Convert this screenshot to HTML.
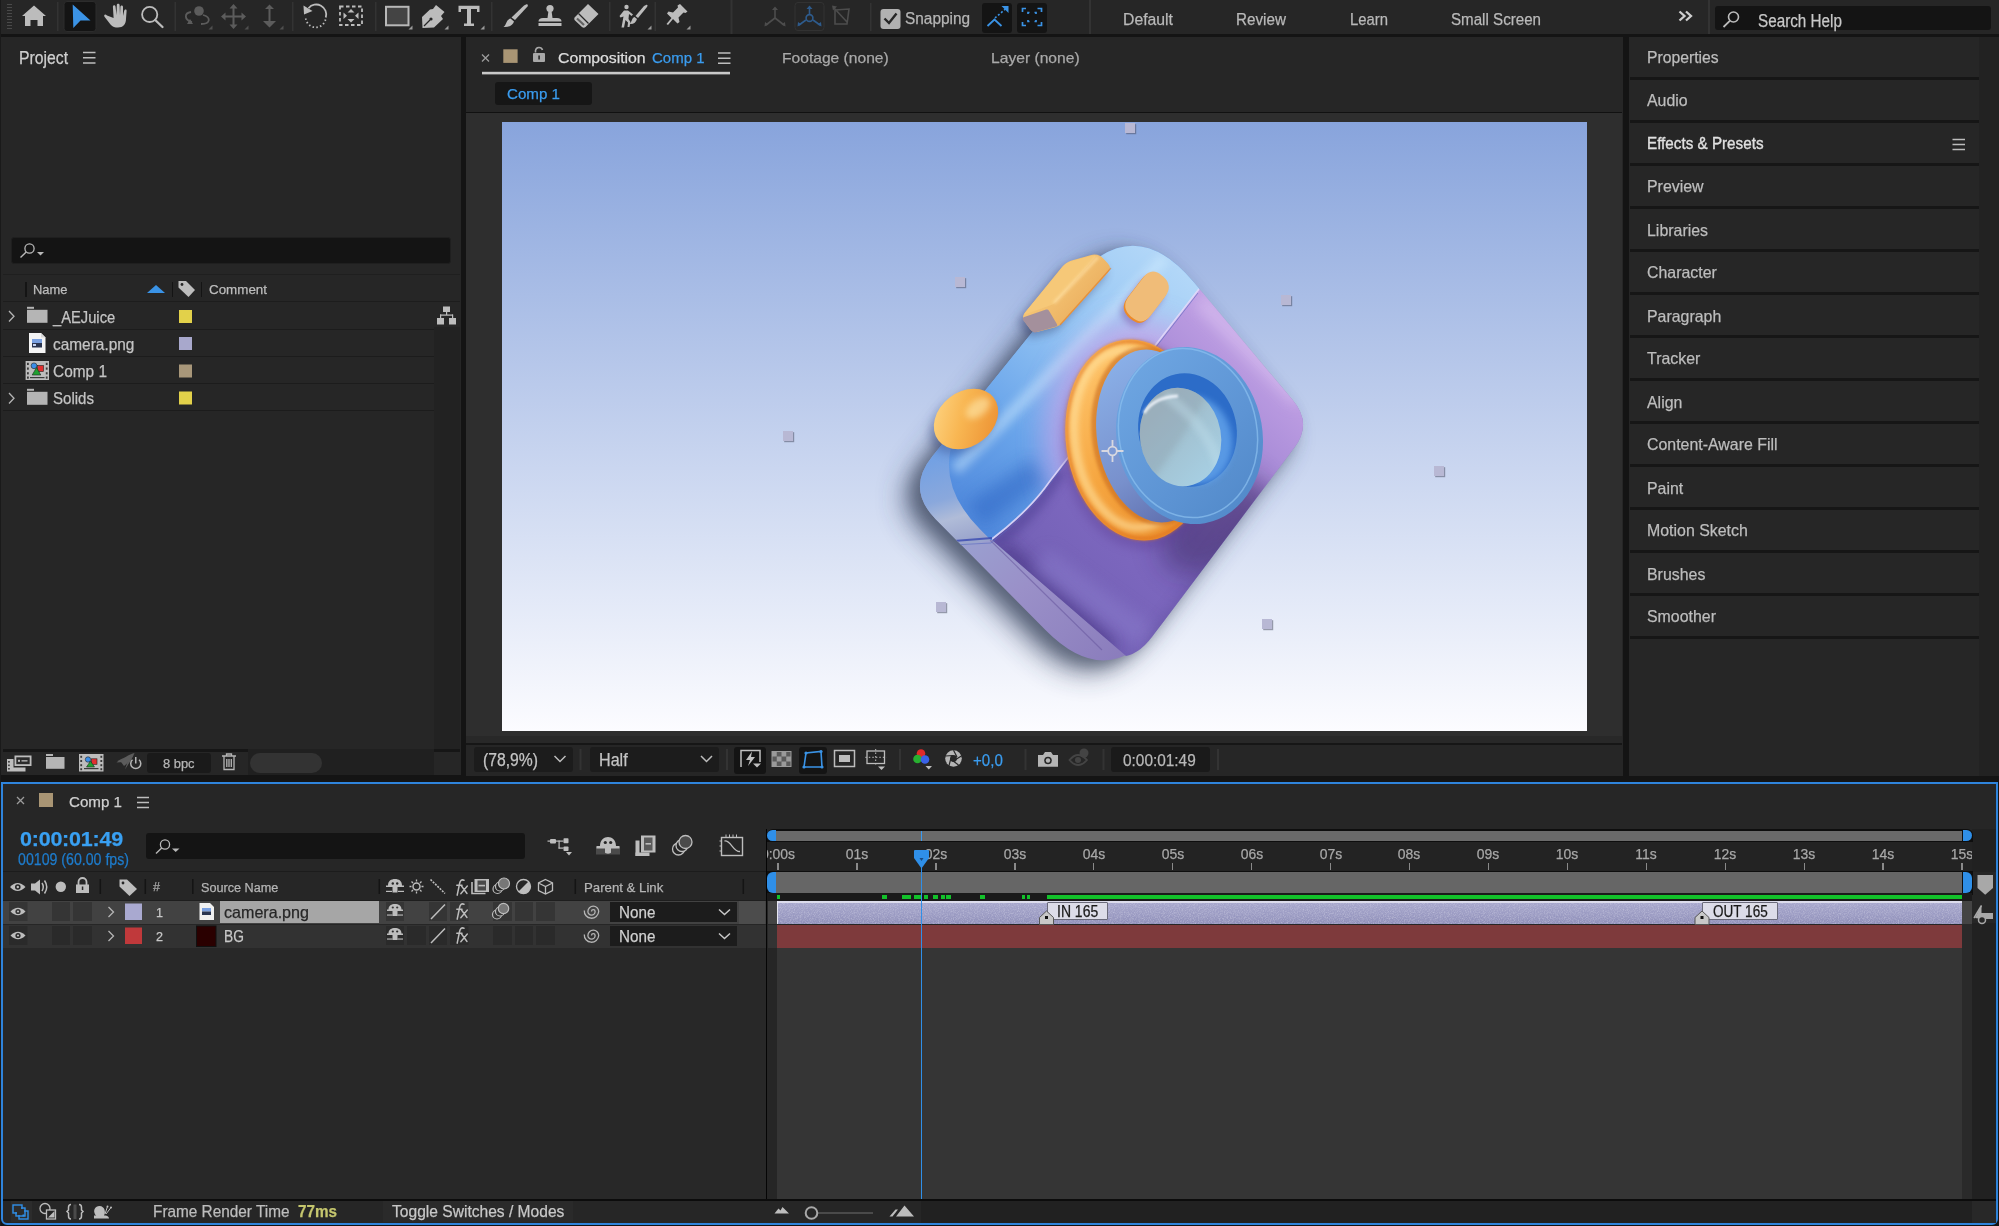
<!DOCTYPE html>
<html><head><meta charset="utf-8">
<style>
*{margin:0;padding:0;box-sizing:border-box}
html,body{width:1999px;height:1226px;overflow:hidden;background:#141414;font-family:"Liberation Sans",sans-serif;color:#c4c4c4}
.a{position:absolute}
.t{position:absolute;white-space:nowrap;line-height:1;-webkit-text-stroke:0.25px currentColor}
svg{position:absolute;overflow:visible}
</style></head><body>
<!-- toolbar -->
<div class="a" style="left:0;top:0;width:1999px;height:34px;background:#262626"></div>
<div class="a" style="left:0;top:0;width:1px;height:1226px;background:#1a1a1a"></div>
<svg style="left:0;top:0" width="1999" height="34">
 <!-- grip -->
 <g stroke="#4a4a4a" stroke-width="1">
  <path d="M7 4.5h5M7 7.5h5M7 10.5h5M7 13.5h5M7 16.5h5M7 19.5h5M7 22.5h5M7 25.5h5M7 28.5h5"/>
 </g>
 <!-- separators -->
 <g fill="#333">
  <rect x="57" y="2" width="1.5" height="29"/><rect x="174.5" y="2" width="1.5" height="29"/>
  <rect x="292" y="2" width="1.5" height="29"/><rect x="375" y="2" width="1.5" height="29"/>
  <rect x="491" y="2" width="1.5" height="29"/><rect x="609" y="2" width="1.5" height="29"/>
  <rect x="654.5" y="2" width="1.5" height="29"/><rect x="730.5" y="0" width="2" height="34"/>
  <rect x="870" y="3" width="1.5" height="28"/><rect x="1089" y="0" width="2" height="34"/>
  <rect x="1708" y="0" width="2" height="34"/>
 </g>
 <!-- home -->
 <path d="M34 5.5 L46 16 L43 16 L43 26 L37.5 26 L37.5 20 L30.5 20 L30.5 26 L25 26 L25 16 L22 16 Z" fill="#bcbcbc"/>
 <!-- selection box -->
 <rect x="64" y="1.5" width="32" height="30" rx="3" fill="#141414" stroke="#2c2c2c"/>
 <path d="M72.7 4.5 L90.5 20.5 L80.5 20.5 L73.3 28 Z" fill="#3b93e6"/>
 <!-- hand -->
 <path d="M107 15.5 C105 13.5 103.5 15 104.5 16.8 L110.5 24.5 C112.5 27 115 27.5 118 27.5 C123 27.5 126 24 126 19 L126.6 11 C126.8 9.2 124.6 9 124.2 10.8 L123 16 L123 7 C123 5 120.5 5 120.4 7 L120 15 L119.6 5.2 C119.5 3.4 116.8 3.4 116.8 5.2 L116.6 15 L115.5 6.5 C115.2 4.6 112.8 4.8 112.9 6.8 L113.6 18 Z" fill="#bcbcbc"/>
 <!-- zoom -->
 <circle cx="149.7" cy="14.4" r="7.6" fill="none" stroke="#bcbcbc" stroke-width="1.8"/>
 <path d="M155.2 20 L162.5 27" stroke="#bcbcbc" stroke-width="2.3" stroke-linecap="round"/>
 <!-- orbit dim -->
 <g fill="none" stroke="#5c5c5c" stroke-width="1.8">
  <path d="M192 22 C184 20 184 13 191 12 M203 15 C211 17 211 24 201 24"/>
 </g>
 <circle cx="199" cy="11" r="4.8" fill="#5c5c5c"/>
 <path d="M190 19 L193 24 L187 24 Z" fill="#5c5c5c"/>
 <path d="M212.5 25.5 L212.5 29.5 L208.5 29.5 Z" fill="#4f4f4f"/>
 <!-- move dim -->
 <g fill="#5c5c5c">
  <rect x="232.5" y="7" width="2" height="19"/><rect x="224" y="15.5" width="19" height="2"/>
  <path d="M233.5 4 L237.5 8.5 L229.5 8.5 Z M233.5 29 L237.5 24.5 L229.5 24.5 Z M221 16.5 L225.5 12.5 L225.5 20.5 Z M246 16.5 L241.5 12.5 L241.5 20.5 Z"/>
  <path d="M248.5 25.5 L248.5 29.5 L244.5 29.5 Z" fill="#4f4f4f"/>
 </g>
 <!-- dolly dim -->
 <g fill="#5c5c5c">
  <rect x="268.5" y="7" width="2" height="18"/>
  <path d="M269.5 4.5 L274 9 L265 9 Z M269.5 27.5 L276 21 L263 21 Z"/>
  <path d="M283.5 25.5 L283.5 29.5 L279.5 29.5 Z" fill="#4f4f4f"/>
 </g>
 <!-- rotate -->
 <path d="M308.5 8.2 A10 10 0 0 1 325.8 17.5" fill="none" stroke="#bcbcbc" stroke-width="1.8"/>
 <path d="M325.5 19.5 A10 10 0 0 1 305.8 18.5" fill="none" stroke="#bcbcbc" stroke-width="1.8" stroke-dasharray="1.5 2.3"/>
 <path d="M303.5 5.5 L304 14.5 L312.5 11 Z" fill="#bcbcbc"/>
 <!-- anchor point -->
 <g fill="none" stroke="#bcbcbc" stroke-width="1.8" stroke-dasharray="3.5 2.5">
  <rect x="340" y="6.5" width="22" height="18.5"/>
 </g>
 <path d="M351 9 L354.5 12.5 L347.5 12.5 Z M351 22.5 L354.5 19 L347.5 19 Z M343.5 12.5 L347 15.8 L343.5 19 Z M358.5 12.5 L355 15.8 L358.5 19 Z" fill="#bcbcbc"/>
 <!-- rectangle -->
 <rect x="386" y="6.8" width="22.5" height="18.5" fill="#444" stroke="#b8b8b8" stroke-width="2"/>
 <path d="M412.5 25.5 L412.5 29.5 L408.5 29.5 Z" fill="#9a9a9a"/>
 <!-- pen -->
 <path d="M436 5 L444.5 12 L441 16 L443 19 L434 27.5 L422.5 28 L422 17 L430 9.5 L433 9 Z" fill="#bcbcbc"/>
 <path d="M424 26 L430 20" stroke="#262626" stroke-width="1.2"/>
 <circle cx="431" cy="19" r="1.6" fill="#262626"/>
 <path d="M448.5 25.5 L448.5 29.5 L444.5 29.5 Z" fill="#9a9a9a"/>
 <!-- type -->
 <path d="M458.5 5.8 H479.5 V12 H477 V9 H471 V23.5 H474 V26 H464 V23.5 H467 V9 H461 V12 H458.5 Z" fill="#bcbcbc"/>
 <path d="M484.5 25.5 L484.5 29.5 L480.5 29.5 Z" fill="#9a9a9a"/>
 <!-- brush -->
 <path d="M526 4.5 C527.5 4 528.5 5 527.5 6.5 L515 20 L511.5 17.5 L524 5.5 Z" fill="#bcbcbc"/>
 <path d="M510.5 18.5 L514 21.5 C513 25 509 27.5 503.5 27 C506.5 25 506 19.5 510.5 18.5 Z" fill="#bcbcbc"/>
 <!-- stamp -->
 <circle cx="550" cy="8.5" r="3.6" fill="#bcbcbc"/>
 <path d="M548.5 10.5 H551.5 L552.5 18 H557 C560 18 561.5 19.5 561.5 21.5 H538.5 C538.5 19.5 540 18 543 18 H547.5 Z" fill="#bcbcbc"/>
 <rect x="538.5" y="23" width="23" height="3" fill="#bcbcbc"/>
 <!-- eraser -->
 <path d="M588 4 L598.5 14 L585.5 27 C584.5 28 583 28 582 27 L575 20.5 C574 19.5 574 18 575 17 Z" fill="#bcbcbc"/>
 <path d="M578.5 13.5 L588.5 23.5" stroke="#262626" stroke-width="1.2"/>
 <path d="M577 18.5 L584 25" stroke="#262626" stroke-width="2.2" opacity="0.6"/>
 <!-- roto brush -->
 <circle cx="626.5" cy="7" r="2.2" fill="#bcbcbc"/>
 <path d="M624 10.5 L628 10.5 L633 14.5 L631.5 16 L629 14 L628.5 19 L630.5 22 L629.5 27 L627.5 27 L628 22.5 L625.5 20 L624 27.5 L621.5 27.5 L623.5 16.5 L620.5 17.5 L619.5 16 Z" fill="#bcbcbc"/>
 <path d="M646 5 C647.5 4.5 648 5.5 647 7 L638 18 L635.5 16 L644 6 Z" fill="#bcbcbc"/>
 <path d="M634.5 17 L637 19 C636 22.5 633.5 24.5 629.5 24 C632 22 631.5 18 634.5 17 Z" fill="#bcbcbc"/>
 <path d="M651.5 25.5 L651.5 29.5 L647.5 29.5 Z" fill="#9a9a9a"/>
 <!-- puppet pin -->
 <path d="M680 4 L687.5 11.5 L685.5 13 L683.5 12.5 L678.5 17.5 L679.5 22 L677.5 23.5 L673 19 L668 25 L666.5 24 L671.5 18 L667 13.5 L668.5 11.5 L673 12.5 L678 7.5 L677.5 5.5 Z" fill="#bcbcbc"/>
 <path d="M690.5 25.5 L690.5 29.5 L686.5 29.5 Z" fill="#9a9a9a"/>
 <!-- 3D axis icons -->
 <g stroke="#4d4d4d" stroke-width="1.6" fill="none">
  <path d="M775 18 V9 M775 18 L766 25 M775 18 L784 25"/>
 </g>
 <g fill="#4d4d4d"><path d="M775 6.5 L778 10 L772 10 Z M764.5 26.5 L765 22 L768.5 24.5 Z M785.5 26.5 L781.5 24.5 L785 22 Z"/></g>
 <rect x="795" y="2.5" width="29" height="28" rx="3" fill="none" stroke="#323232"/>
 <g stroke="#2e5b8c" stroke-width="1.6" fill="none">
  <path d="M809.5 14 V8 M806 20 L799 25 M813 20 L820 25"/><circle cx="809.5" cy="18" r="3.4"/>
 </g>
 <g fill="#2e5b8c"><path d="M809.5 5.5 L812.5 9 L806.5 9 Z M797.5 26.5 L798 22 L801.5 24.5 Z M821.5 26.5 L817.5 24.5 L821 22 Z"/></g>
 <g stroke="#4d4d4d" stroke-width="1.6" fill="none">
  <path d="M835 10 L849 9 L847 24 L835 24 Z M834 8 L847 22"/>
 </g>
 <path d="M832 5.5 L837 6.5 L833 10.5 Z" fill="#4d4d4d"/>
 <!-- snapping checkbox -->
 <rect x="880.5" y="9" width="20" height="20" rx="3" fill="#b1b1b1"/>
 <path d="M884.5 18.5 L889 23 L896.5 13.5" fill="none" stroke="#262626" stroke-width="2.4"/>
 <!-- snap icons -->
 <rect x="982" y="3" width="30" height="30" rx="3" fill="#141414"/>
 <path d="M987.5 26 L994.5 19.5 L1001.5 26" fill="none" stroke="#3a93e6" stroke-width="1.8"/>
 <path d="M995 18 L1006 8.5" fill="none" stroke="#3a93e6" stroke-width="1.6" stroke-dasharray="2 2"/>
 <path d="M1008.5 6 L1008.5 13 L1001.5 6 Z" fill="#3a93e6"/>
 <rect x="1017" y="3" width="30" height="30" rx="3" fill="#141414"/>
 <g fill="none" stroke="#3a93e6" stroke-width="1.7">
  <path d="M1022.5 12 V8.5 H1026 M1037.5 8.5 H1041.5 V12 M1041.5 22 V25.5 H1037.5 M1026 25.5 H1022.5 V22"/>
  <path d="M1028 14 V12.5 H1029.5 M1034.5 12.5 H1036 V14 M1036 20 V21.5 H1034.5 M1029.5 21.5 H1028 V20"/>
 </g>
 <!-- >> -->
 <path d="M1679.5 11.5 L1684.5 16 L1679.5 20.5 M1686 11.5 L1691 16 L1686 20.5" fill="none" stroke="#cfcfcf" stroke-width="2.3"/>
 <!-- search help -->
 <rect x="1715" y="6" width="276" height="24" rx="3" fill="#141414"/>
 <circle cx="1733.5" cy="17" r="5" fill="none" stroke="#bcbcbc" stroke-width="1.6"/>
 <path d="M1729.8 20.8 L1723.5 27" stroke="#bcbcbc" stroke-width="1.8"/>
</svg>
<div class="t" style="left:905.0px;top:10.0px;font-size:16.25px;color:#b6b6b6;transform:scaleX(0.947);transform-origin:0 0">Snapping</div>
<div class="t" style="left:1123.0px;top:11.0px;font-size:17.36px;color:#b9b9b9;transform:scaleX(0.909);transform-origin:0 0">Default</div>
<div class="t" style="left:1236.0px;top:11.0px;font-size:17.36px;color:#b9b9b9;transform:scaleX(0.878);transform-origin:0 0">Review</div>
<div class="t" style="left:1350.0px;top:11.0px;font-size:17.36px;color:#b9b9b9;transform:scaleX(0.856);transform-origin:0 0">Learn</div>
<div class="t" style="left:1451.0px;top:11.0px;font-size:17.36px;color:#b9b9b9;transform:scaleX(0.872);transform-origin:0 0">Small Screen</div>
<div class="t" style="left:1758.0px;top:12.0px;font-size:18.06px;color:#c8c8c8;transform:scaleX(0.845);transform-origin:0 0">Search Help</div>
<!-- project panel -->
<div class="a" style="left:1px;top:37px;width:460px;height:738px;background:#262626"></div>
<div class="t" style="left:19.0px;top:50.0px;font-size:17.50px;color:#cfcfcf;transform:scaleX(0.900);transform-origin:0 0">Project</div>
<svg style="left:0;top:0" width="1" height="1">
 <path d="M83 52.5h12.5M83 57.8h12.5M83 63h12.5" stroke="#bdbdbd" stroke-width="1.6"/>
</svg>
<!-- search -->
<div class="a" style="left:11px;top:237px;width:440px;height:27px;background:#141414;border-radius:3px;border:1px solid #1f1f1f"></div>
<svg style="left:0;top:0" width="1" height="1">
 <circle cx="29.5" cy="248.5" r="4.6" fill="none" stroke="#b8b8b8" stroke-width="1.3"/>
 <path d="M26.2 252 L20.5 257.5" stroke="#b8b8b8" stroke-width="1.4"/>
 <path d="M37 252 L44 252 L40.5 255.5 Z" fill="#b8b8b8"/>
</svg>
<!-- column header -->
<div class="a" style="left:3px;top:274px;width:457px;height:1px;background:#1f1f1f"></div>
<div class="a" style="left:3px;top:301px;width:457px;height:1px;background:#1d1d1d"></div>
<div class="a" style="left:25px;top:282px;width:1.5px;height:15px;background:#141414"></div>
<div class="a" style="left:171.5px;top:282px;width:1.5px;height:15px;background:#141414"></div>
<div class="a" style="left:200.5px;top:282px;width:1.5px;height:15px;background:#141414"></div>
<div class="t" style="left:33.0px;top:283.0px;font-size:13.61px;color:#bdbdbd;transform:scaleX(0.950);transform-origin:0 0">Name</div>
<div class="t" style="left:209.0px;top:283.0px;font-size:13.61px;color:#bdbdbd;transform:scaleX(0.983);transform-origin:0 0">Comment</div>
<svg style="left:0;top:0" width="1" height="1">
 <path d="M147 293 L156 285 L165 293 Z" fill="#3a93e6"/>
 <path d="M178.5 281 L186 281 L195 290 L188.5 297 L178.5 287.5 Z" fill="#bdbdbd"/>
 <circle cx="182" cy="284.5" r="1.4" fill="#262626"/>
</svg>
<!-- rows -->
<div class="a" style="left:434px;top:302px;width:26px;height:448px;background:#222"></div>
<div class="a" style="left:434px;top:302px;width:26px;height:25px;background:#262626"></div>
<div class="a" style="left:3px;top:329px;width:431px;height:1px;background:#1c1c1c"></div>
<div class="a" style="left:3px;top:356px;width:431px;height:1px;background:#1c1c1c"></div>
<div class="a" style="left:3px;top:383px;width:431px;height:1px;background:#1c1c1c"></div>
<div class="a" style="left:3px;top:410px;width:431px;height:1px;background:#1c1c1c"></div>
<div class="t" style="left:53.0px;top:310.0px;font-size:16.53px;color:#c4c4c4;transform:scaleX(0.891);transform-origin:0 0">_AEJuice</div>
<div class="t" style="left:53.0px;top:336.0px;font-size:17.12px;color:#c4c4c4;transform:scaleX(0.901);transform-origin:0 0">camera.png</div>
<div class="t" style="left:53.0px;top:363.0px;font-size:17.12px;color:#c4c4c4;transform:scaleX(0.901);transform-origin:0 0">Comp 1</div>
<div class="t" style="left:53.0px;top:390.0px;font-size:17.12px;color:#c4c4c4;transform:scaleX(0.879);transform-origin:0 0">Solids</div>
<svg style="left:0;top:0" width="1" height="1">
 <g fill="none" stroke="#b5b5b5" stroke-width="1.3">
  <path d="M9 311 L14 316.3 L9 321.5"/><path d="M9 393 L14 398.3 L9 403.5"/>
 </g>
 <g fill="#b5b5b5">
  <rect x="27" y="306.8" width="7" height="2"/><rect x="27" y="309.8" width="20.5" height="13"/>
  <rect x="27" y="388.8" width="7" height="2"/><rect x="27" y="391.8" width="20.5" height="13"/>
 </g>
 <!-- png icon -->
 <path d="M29 333 L41 333 L45.5 337.5 L45.5 353 L29 353 Z" fill="#f4f4f4"/>
 <path d="M41 333 L41 337.5 L45.5 337.5" fill="#d8d8d8"/>
 <rect x="32" y="339" width="10" height="4" fill="#7aa0e0"/>
 <rect x="32" y="343" width="10" height="4.5" fill="#2a3550"/>
 <rect x="33" y="344" width="3" height="2" fill="#c8d4f0"/>
 <!-- comp icon -->
 <rect x="25.6" y="361" width="23.4" height="19" fill="#bdbdbd"/>
 <g fill="#3a3a3a"><rect x="27" y="362.8" width="1.8" height="2.2"/><rect x="27" y="367.5" width="1.8" height="2.2"/><rect x="27" y="372.2" width="1.8" height="2.2"/><rect x="27" y="376.5" width="1.8" height="2.2"/><rect x="45.8" y="362.8" width="1.8" height="2.2"/><rect x="45.8" y="367.5" width="1.8" height="2.2"/><rect x="45.8" y="372.2" width="1.8" height="2.2"/><rect x="45.8" y="376.5" width="1.8" height="2.2"/></g>
 <rect x="30" y="377" width="14.5" height="1.2" fill="#3a3a3a"/>
 <rect x="37.5" y="365.5" width="6" height="6" fill="#e03030" stroke="#222" stroke-width="0.6"/>
 <circle cx="34" cy="365.8" r="2.9" fill="#3a8ee8" stroke="#222" stroke-width="0.6"/>
 <path d="M36.5 367.5 L40.8 375 L32.2 375 Z" fill="#20a030" stroke="#222" stroke-width="0.6"/>
 <!-- label swatches -->
 <rect x="179" y="310" width="13" height="13" fill="#e2d14a"/>
 <rect x="179" y="337" width="13" height="13" fill="#a8a8cc"/>
 <rect x="179" y="364.5" width="13" height="13" fill="#a8977a"/>
 <rect x="179" y="391.5" width="13" height="13" fill="#e2d14a"/>
 <!-- hierarchy icon -->
 <g fill="#bdbdbd">
  <rect x="443" y="306.5" width="7" height="5.5"/><rect x="437" y="318" width="7" height="6.5"/><rect x="449" y="318" width="7" height="6.5"/>
  <rect x="446" y="312" width="1.2" height="3"/><rect x="440" y="314.5" width="13" height="1.2"/><rect x="440" y="314.5" width="1.2" height="3.5"/><rect x="452" y="314.5" width="1.2" height="3.5"/>
 </g>
</svg>
<!-- bottom bar -->
<div class="a" style="left:3px;top:749px;width:457px;height:3px;background:#161616"></div>
<div class="a" style="left:248px;top:749px;width:186px;height:26px;background:#202020"></div>
<div class="a" style="left:250px;top:752.5px;width:72px;height:20px;background:#333;border-radius:10px"></div>
<div class="a" style="left:147px;top:753px;width:64px;height:20px;background:#1a1a1a;border-radius:3px"></div>
<div class="t" style="left:163.4px;top:757.0px;font-size:13.06px;color:#b5b5b5;transform:scaleX(0.989);transform-origin:0 0">8 bpc</div>
<svg style="left:0;top:0" width="1" height="1">
 <!-- interpret footage -->
 <rect x="14.5" y="755.5" width="17" height="10.5" fill="#bdbdbd"/>
 <rect x="16.3" y="757.3" width="13.4" height="6.9" fill="#2a2a2a"/>
 <rect x="18" y="759.8" width="2" height="2" fill="#bdbdbd"/><rect x="21.5" y="760.2" width="6" height="1.3" fill="#bdbdbd"/>
 <path d="M7 759 H13.5 V767.5 H25.5 V771.5 H7 Z" fill="#bdbdbd"/>
 <g fill="#2a2a2a"><rect x="8.2" y="761" width="1.5" height="1.6"/><rect x="8.2" y="764.5" width="1.5" height="1.6"/><rect x="8.2" y="768" width="1.5" height="1.6"/></g>
 <!-- folder -->
 <rect x="46" y="754" width="7" height="2" fill="#b5b5b5"/><rect x="46" y="757" width="18.5" height="11.8" fill="#b5b5b5"/>
 <!-- new comp -->
 <rect x="79" y="754" width="24.5" height="17.5" fill="#bdbdbd"/>
 <g fill="#3a3a3a"><rect x="80.3" y="755.8" width="1.8" height="2"/><rect x="80.3" y="760" width="1.8" height="2"/><rect x="80.3" y="764.2" width="1.8" height="2"/><rect x="80.3" y="768.2" width="1.8" height="2"/><rect x="100.4" y="755.8" width="1.8" height="2"/><rect x="100.4" y="760" width="1.8" height="2"/><rect x="100.4" y="764.2" width="1.8" height="2"/><rect x="100.4" y="768.2" width="1.8" height="2"/></g>
 <rect x="84" y="768" width="14.5" height="1.2" fill="#3a3a3a"/>
 <rect x="91.5" y="758.8" width="5.5" height="5.5" fill="#e03030" stroke="#222" stroke-width="0.6"/>
 <circle cx="88" cy="759.5" r="2.7" fill="#3a8ee8" stroke="#222" stroke-width="0.6"/>
 <path d="M90.5 761 L94.5 767 L86.5 767 Z" fill="#20a030" stroke="#222" stroke-width="0.6"/>
 <!-- rocket power -->
 <path d="M125 769.5 L127.5 762 C130 758 133 755 134.5 753 C133 756 131.5 760 128.5 764 Z" fill="#5c5c5c"/>
 <path d="M116.5 762.5 C119.5 759 124 757.5 128 757 L123.5 762 Z" fill="#5c5c5c"/>
 <path d="M121 762 C124 757 130 754 134.5 753 C132 758 128 763 124 766 Z" fill="#5c5c5c"/>
 <path d="M132.5 759.8 A5 5 0 1 0 139 759.8" fill="none" stroke="#b5b5b5" stroke-width="1.5"/>
 <rect x="135" y="757" width="1.5" height="6.5" fill="#b5b5b5"/>
 <!-- trash -->
 <g fill="none" stroke="#b5b5b5" stroke-width="1.3"><path d="M222 756 H236 M224 756 V769.5 H234 V756 M226.8 759 V767 M229 759 V767 M231.3 759 V767 M226.5 756 V754 H231.5 V756"/></g>
</svg>
<!-- comp panel -->
<div class="a" style="left:466px;top:37px;width:1157px;height:739px;background:#262626"></div>
<div class="a" style="left:466px;top:113px;width:1156px;height:623px;background:#2e2e2e"></div>
<div class="a" style="left:466px;top:736px;width:1156px;height:7px;background:#282828"></div>
<div class="a" style="left:466px;top:743px;width:1156px;height:1.5px;background:#161616"></div>
<div class="a" style="left:466px;top:111.5px;width:1156px;height:1.5px;background:#111"></div>
<!-- tab -->
<svg style="left:0;top:0" width="1" height="1">
 <path d="M482 54.5 L489 61.5 M489 54.5 L482 61.5" stroke="#9c9c9c" stroke-width="1.3"/>
 <rect x="503.3" y="49.3" width="14.3" height="13.6" fill="#a99574"/>
 <path d="M535.5 52.5 V50.5 A3.6 3.6 0 0 1 542.5 50" fill="none" stroke="#a8a8a8" stroke-width="1.6"/>
 <rect x="533" y="53" width="12" height="9" rx="1" fill="#a8a8a8"/>
 <rect x="538.3" y="55.5" width="1.6" height="4" fill="#262626"/>
 <path d="M718 53h12.5M718 58.2h12.5M718 63.3h12.5" stroke="#bdbdbd" stroke-width="1.5"/>
 <rect x="482" y="71.8" width="248" height="2.6" fill="#c9c9c9"/>
</svg>
<div class="t" style="left:558.0px;top:50.0px;font-size:15.56px;color:#dedede;letter-spacing:-0.05px;transform:scaleX(1.020);transform-origin:0 0">Composition</div>
<div class="t" style="left:651.7px;top:50.0px;font-size:15.56px;color:#3a9cef;transform:scaleX(0.964);transform-origin:0 0">Comp 1</div>
<div class="t" style="left:781.6px;top:50.0px;font-size:15.56px;color:#a9a9a9;transform:scaleX(1.004);transform-origin:0 0">Footage (none)</div>
<div class="t" style="left:990.6px;top:50.0px;font-size:15.56px;color:#a9a9a9;transform:scaleX(1.005);transform-origin:0 0">Layer (none)</div>
<div class="a" style="left:495px;top:81.5px;width:97px;height:23px;background:#161616;border-radius:3px"></div>
<div class="t" style="left:507.0px;top:86.0px;font-size:15.56px;color:#3a9cef;transform:scaleX(0.973);transform-origin:0 0">Comp 1</div>
<!-- canvas -->
<div class="a" style="left:502px;top:122px;width:1085px;height:609px;background:linear-gradient(180deg,#88a4dc 0%,#fcfcff 100%)"></div>
<svg style="left:0;top:0" width="1999" height="1226">
 <defs>
  <clipPath id="cv"><rect x="502" y="122" width="1085" height="609"/></clipPath>
  <filter id="bl14" x="-50%" y="-50%" width="200%" height="200%"><feGaussianBlur stdDeviation="14"/></filter>
  <filter id="bl8" x="-50%" y="-50%" width="200%" height="200%"><feGaussianBlur stdDeviation="8"/></filter>
  <filter id="bl5" x="-50%" y="-50%" width="200%" height="200%"><feGaussianBlur stdDeviation="5"/></filter>
  <filter id="bl3" x="-50%" y="-50%" width="200%" height="200%"><feGaussianBlur stdDeviation="3"/></filter>
  <filter id="bl2" x="-50%" y="-50%" width="200%" height="200%"><feGaussianBlur stdDeviation="1.5"/></filter>
  <filter id="bl1" x="-50%" y="-50%" width="200%" height="200%"><feGaussianBlur stdDeviation="0.8"/></filter>
  <linearGradient id="gside" gradientUnits="userSpaceOnUse" x1="917" y1="440" x2="1120" y2="665">
   <stop offset="0" stop-color="#8aa6da"/><stop offset="0.35" stop-color="#9aa0d0"/><stop offset="0.6" stop-color="#9a90c8"/><stop offset="1" stop-color="#8a7cbc"/>
  </linearGradient>
  <linearGradient id="gbside" gradientUnits="userSpaceOnUse" x1="925" y1="445" x2="955" y2="545">
   <stop offset="0" stop-color="#6a9ee6"/><stop offset="0.55" stop-color="#8aa8dc"/><stop offset="0.75" stop-color="#b0bcd8"/><stop offset="1" stop-color="#9aa4cc"/>
  </linearGradient>
  <linearGradient id="gbring" gradientUnits="userSpaceOnUse" x1="1130" y1="360" x2="1250" y2="520">
   <stop offset="0" stop-color="#6ea6e2"/><stop offset="0.6" stop-color="#5d94d4"/><stop offset="1" stop-color="#5088c8"/>
  </linearGradient>
  <linearGradient id="gpurple" gradientUnits="userSpaceOnUse" x1="1290" y1="380" x2="1060" y2="620">
   <stop offset="0" stop-color="#c0a0e4"/><stop offset="0.3" stop-color="#a286d4"/><stop offset="0.65" stop-color="#7e68c0"/><stop offset="1" stop-color="#7260b4"/>
  </linearGradient>
  <linearGradient id="gblue" gradientUnits="userSpaceOnUse" x1="1180" y1="260" x2="960" y2="520">
   <stop offset="0" stop-color="#b4d8f8"/><stop offset="0.35" stop-color="#96c6f4"/><stop offset="0.7" stop-color="#69a4ea"/><stop offset="1" stop-color="#4f88dc"/>
  </linearGradient>
  <linearGradient id="gorange" x1="0" y1="0" x2="1" y2="1">
   <stop offset="0" stop-color="#ffd98a"/><stop offset="0.45" stop-color="#f8b652"/><stop offset="1" stop-color="#ea8a2c"/>
  </linearGradient>
  <linearGradient id="gshut" gradientUnits="userSpaceOnUse" x1="1040" y1="270" x2="1100" y2="320">
   <stop offset="0" stop-color="#f8cc7c"/><stop offset="1" stop-color="#e8a858"/>
  </linearGradient>
  <linearGradient id="gring" gradientUnits="userSpaceOnUse" x1="1080" y1="350" x2="1200" y2="540">
   <stop offset="0" stop-color="#ffc870"/><stop offset="0.5" stop-color="#f6a640"/><stop offset="1" stop-color="#e88a2a"/>
  </linearGradient>
  <linearGradient id="gcyl" gradientUnits="userSpaceOnUse" x1="1110" y1="360" x2="1180" y2="530">
   <stop offset="0" stop-color="#8ab0e8"/><stop offset="0.6" stop-color="#7890cc"/><stop offset="1" stop-color="#5a68a8"/>
  </linearGradient>
  <linearGradient id="gglass" gradientUnits="userSpaceOnUse" x1="1150" y1="390" x2="1215" y2="485">
   <stop offset="0" stop-color="#a4b6c0"/><stop offset="0.5" stop-color="#a2c2d2"/><stop offset="1" stop-color="#a8d2e6"/>
  </linearGradient>
  <clipPath id="blueclip"><path d="M880 200 L1260 200 L1199 289 L1050 481 Q1030 510 992 540 L880 560 Z"/></clipPath>
  <clipPath id="purpclip"><path d="M1199 289 L1050 481 Q1030 510 992 540 L1200 720 L1400 420 Z"/></clipPath>
  <clipPath id="silclip"><path d="M1071.8 283.3 Q1132.0 208.6 1193.7 282.1 L1293.1 400.6 Q1312.4 423.6 1294.4 447.6 L1163.1 622.3 Q1109.0 694.3 1045.7 630.3 L935.5 518.9 Q906.0 489.0 932.4 456.3 Z"/></clipPath>
  <clipPath id="faceclip"><path d="M1071.7 283.3 Q1132.0 208.6 1193.7 282.1 L1293.1 400.6 Q1312.4 423.6 1294.4 447.6 L1152.3 636.4 Q1124.0 674.0 1090.8 640.7 L980.3 529.5 Q921.0 470.0 973.8 404.6 Z"/></clipPath>
 </defs>
 <g clip-path="url(#cv)">
  <path d="M1071.8 283.3 Q1132.0 208.6 1193.7 282.1 L1293.1 400.6 Q1312.4 423.6 1294.4 447.6 L1163.1 622.3 Q1109.0 694.3 1045.7 630.3 L935.5 518.9 Q906.0 489.0 932.4 456.3 Z" transform="translate(-16 12)" fill="#2e3a5a" opacity="0.6" filter="url(#bl14)"/>
  <path d="M1071.8 283.3 Q1132.0 208.6 1193.7 282.1 L1293.1 400.6 Q1312.4 423.6 1294.4 447.6 L1163.1 622.3 Q1109.0 694.3 1045.7 630.3 L935.5 518.9 Q906.0 489.0 932.4 456.3 Z" transform="translate(-9 5)" fill="#3a4458" opacity="0.5" filter="url(#bl8)"/>
  <path d="M1071.8 283.3 Q1132.0 208.6 1193.7 282.1 L1293.1 400.6 Q1312.4 423.6 1294.4 447.6 L1163.1 622.3 Q1109.0 694.3 1045.7 630.3 L935.5 518.9 Q906.0 489.0 932.4 456.3 Z" fill="url(#gside)"/>
  <path d="M990 540 L1102 650" stroke="#6a5aa0" stroke-width="1.2" opacity="0.6"/>
  <g clip-path="url(#purpclip)">
   <path d="M1071.7 283.3 Q1132.0 208.6 1193.7 282.1 L1293.1 400.6 Q1312.4 423.6 1294.4 447.6 L1152.3 636.4 Q1124.0 674.0 1090.8 640.7 L980.3 529.5 Q921.0 470.0 973.8 404.6 Z" fill="url(#gpurple)"/>
   <g clip-path="url(#faceclip)">
    <path d="M1000 548 L1110 650" stroke="#3c2c78" stroke-width="22" opacity="0.55" filter="url(#bl8)"/>
    <path d="M1040 560 L1150 640" stroke="#8a7ccc" stroke-width="26" opacity="0.55" filter="url(#bl8)"/>
    <ellipse cx="1215" cy="525" rx="62" ry="40" transform="rotate(-40 1215 525)" fill="#2e1e56" opacity="0.5" filter="url(#bl14)"/>
    <path d="M1150 650 L1270 490" stroke="#3a2a70" stroke-width="14" opacity="0.25" filter="url(#bl8)"/>
    <path d="M1300 400 L1200 300" stroke="#e6d0f6" stroke-width="14" opacity="0.55" filter="url(#bl8)"/>
    <path d="M1060 470 Q1030 520 990 545" stroke="#4a3a90" stroke-width="14" fill="none" opacity="0.5" filter="url(#bl5)"/>
   </g>
  </g>
  <g clip-path="url(#blueclip)">
   <path d="M1071.8 283.3 Q1132.0 208.6 1193.7 282.1 L1293.1 400.6 Q1312.4 423.6 1294.4 447.6 L1163.1 622.3 Q1109.0 694.3 1045.7 630.3 L935.5 518.9 Q906.0 489.0 932.4 456.3 Z" fill="url(#gbside)"/>
   <path d="M1071.7 283.3 Q1132.0 208.6 1193.7 282.1 L1293.1 400.6 Q1312.4 423.6 1294.4 447.6 L1152.3 636.4 Q1124.0 674.0 1090.8 640.7 L980.3 529.5 Q921.0 470.0 973.8 404.6 Z" fill="url(#gblue)"/>
   <g clip-path="url(#faceclip)">
    <path d="M955 470 L1165 258" stroke="#d0ecff" stroke-width="12" opacity="0.5" filter="url(#bl5)"/>
    <path d="M975 515 L1040 470" stroke="#2f66c4" stroke-width="28" opacity="0.55" filter="url(#bl8)"/>
    <ellipse cx="1140" cy="440" rx="95" ry="120" fill="#c8a0e6" opacity="0.75" filter="url(#bl14)"/>
   </g>
  </g>
  <g clip-path="url(#silclip)">
  <path d="M992 539 Q1030 510 1050 481 L1199 289" fill="none" stroke="#e4dcfa" stroke-width="1.8" opacity="0.85"/>
  <path d="M954 541 L992 538" fill="none" stroke="#3848b0" stroke-width="2" opacity="0.8"/>
  <path d="M955 543 L993 541 Q1031 512 1051 483 L1200 291" fill="none" stroke="#5a6ac0" stroke-width="1" opacity="0.6" transform="translate(-2 2)"/>
  </g>
  <!-- shutter -->
  <path d="M1024.4 321.1 Q1021.5 317.0 1024.6 313.1 L1062.2 266.7 Q1066.0 262.0 1071.8 260.4 L1090.3 255.2 Q1098.0 253.0 1103.5 258.8 L1107.9 263.6 Q1112.0 268.0 1108.0 272.5 L1063.3 322.3 Q1060.0 326.0 1055.2 327.3 L1037.8 331.7 Q1033.0 333.0 1030.1 328.9 Z" transform="translate(-4 5)" fill="#344070" opacity="0.45" filter="url(#bl5)"/>
  <path d="M1024.4 321.1 Q1021.5 317.0 1024.6 313.1 L1062.2 266.7 Q1066.0 262.0 1071.8 260.4 L1090.3 255.2 Q1098.0 253.0 1103.5 258.8 L1107.9 263.6 Q1112.0 268.0 1108.0 272.5 L1063.3 322.3 Q1060.0 326.0 1055.2 327.3 L1037.8 331.7 Q1033.0 333.0 1030.1 328.9 Z" fill="url(#gshut)"/>
  <path d="M1023.3 320.4 Q1021.5 318.0 1024.3 317.0 L1046.1 309.6 Q1048.0 309.0 1049.0 310.7 L1057.0 324.3 Q1058.0 326.0 1056.1 326.5 L1035.9 332.2 Q1033.0 333.0 1031.2 330.6 Z" fill="#a4909c"/>
  <path d="M1026.8 313.7 Q1023.0 315.0 1025.5 311.9 L1062.8 266.9 Q1066.0 263.0 1070.8 261.6 L1092.2 255.6 Q1098.0 254.0 1094.0 258.5 L1056.0 301.7 Q1054.0 304.0 1051.2 305.0 Z" fill="#f6c878"/>
  <path d="M1054 303 L1098 257" stroke="#ffe2a8" stroke-width="3" opacity="0.7" filter="url(#bl2)"/>
  <path d="M1060 325 L1111 268" stroke="#e07820" stroke-width="1.2" opacity="0.6"/>
  <!-- small pill button -->
  <path d="M1129.6 318.2 Q1119.0 309.0 1127.4 297.8 L1141.6 279.2 Q1150.0 268.0 1160.6 277.2 L1161.4 277.8 Q1172.0 287.0 1163.6 298.2 L1149.4 316.8 Q1141.0 328.0 1130.4 318.8 Z" transform="translate(-3 4)" fill="#7a50a0" opacity="0.45" filter="url(#bl3)"/>
  <path d="M1129.6 318.2 Q1119.0 309.0 1127.4 297.8 L1141.6 279.2 Q1150.0 268.0 1160.6 277.2 L1161.4 277.8 Q1172.0 287.0 1163.6 298.2 L1149.4 316.8 Q1141.0 328.0 1130.4 318.8 Z" fill="#ec8a2a"/>
  <path d="M1129.6 318.2 Q1119.0 309.0 1127.4 297.8 L1141.6 279.2 Q1150.0 268.0 1160.6 277.2 L1161.4 277.8 Q1172.0 287.0 1163.6 298.2 L1149.4 316.8 Q1141.0 328.0 1130.4 318.8 Z" transform="translate(1.5 -1.5)" fill="#f0bc78"/>
  <!-- left bump -->
  <ellipse cx="962" cy="424" rx="36" ry="26" transform="rotate(-38 962 424)" fill="#3a4a80" opacity="0.4" filter="url(#bl5)"/>
  <ellipse cx="966" cy="419" rx="35" ry="27" transform="rotate(-38 966 419)" fill="url(#gorange)"/>
  <ellipse cx="978" cy="408" rx="14" ry="8" transform="rotate(-38 978 408)" fill="#fff0b8" opacity="0.55" filter="url(#bl3)"/>
  <!-- lens -->
  <ellipse cx="1140" cy="446" rx="78" ry="104" transform="rotate(-6 1140 446)" fill="#5a3a90" opacity="0.35" filter="url(#bl5)"/>
  <ellipse cx="1137" cy="440" rx="71" ry="101" transform="rotate(-8 1137 440)" fill="url(#gring)"/>
  <ellipse cx="1137" cy="440" rx="69" ry="99" transform="rotate(-8 1137 440)" fill="none" stroke="#e2761e" stroke-width="4" opacity="0.7" filter="url(#bl2)"/>
  <ellipse cx="1131" cy="439" rx="56" ry="89" transform="rotate(-8 1131 439)" fill="none" stroke="#ffe3a0" stroke-width="7" opacity="0.75" filter="url(#bl3)"/>
  <ellipse cx="1152" cy="436" rx="60" ry="90" transform="rotate(-9 1152 436)" fill="#c86a1e" opacity="0.6" filter="url(#bl2)"/>
  <ellipse cx="1154" cy="436" rx="57" ry="87" transform="rotate(-9 1154 436)" fill="url(#gcyl)"/>
  <ellipse cx="1189.5" cy="435.5" rx="73" ry="89" transform="rotate(-10 1189.5 435.5)" fill="url(#gbring)"/>
  <ellipse cx="1188" cy="433" rx="69" ry="85" transform="rotate(-10 1188 433)" fill="none" stroke="#8cc0f0" stroke-width="1.5" opacity="0.7"/>
  <ellipse cx="1187.5" cy="430" rx="49" ry="57" transform="rotate(-12 1187.5 430)" fill="#2c6cc8"/>
  <ellipse cx="1196" cy="440" rx="36" ry="44" transform="rotate(-12 1196 440)" fill="#64a4ec" opacity="0.8" filter="url(#bl3)"/>
  <ellipse cx="1180.5" cy="437" rx="40.5" ry="49.5" transform="rotate(-10 1180.5 437)" fill="url(#gglass)"/>
  <clipPath id="glassclip"><ellipse cx="1180.5" cy="437" rx="40.5" ry="49.5" transform="rotate(-10 1180.5 437)"/></clipPath>
  <g clip-path="url(#glassclip)">
   <path d="M1130 380 L1215 380 Q1190 430 1145 490 L1130 490 Z" fill="#8a9ca8" opacity="0.35" filter="url(#bl3)"/>
   <path d="M1165 395 Q1215 430 1222 480" stroke="#c4e2ee" stroke-width="10" fill="none" opacity="0.4" filter="url(#bl3)"/>
  </g>
  <path d="M1144 413 Q1154 397 1178 396" stroke="#f4f8ff" stroke-width="3.2" fill="none" opacity="0.85" filter="url(#bl1)"/>
  <!-- anchor crosshair -->
  <g stroke="#d8d8e0" stroke-width="1.8" fill="none"><circle cx="1112.5" cy="451" r="4.3"/><path d="M1112.5 440V446.5M1112.5 455.5V462M1101.5 451H1108M1117 451H1123.5"/></g>
  <!-- handles -->
  <g fill="#50546a" opacity="0.55">
   <rect x="1126.2" y="124.2" width="10" height="10"/><rect x="956.2" y="278.2" width="10" height="10"/><rect x="1282.2" y="296.2" width="10" height="10"/>
   <rect x="784.2" y="432.2" width="10" height="10"/><rect x="1435.2" y="467.2" width="10" height="10"/><rect x="937.2" y="603.2" width="10" height="10"/><rect x="1263.2" y="620.2" width="10" height="10"/>
  </g>
  <g fill="#b8b8d4">
   <rect x="1125" y="123" width="10" height="10"/><rect x="955" y="277" width="10" height="10"/><rect x="1281" y="295" width="10" height="10"/>
   <rect x="783" y="431" width="10" height="10"/><rect x="1434" y="466" width="10" height="10"/><rect x="936" y="602" width="10" height="10"/><rect x="1262" y="619" width="10" height="10"/>
  </g>
 </g>
</svg>
<!-- bottom bar -->
<div class="a" style="left:474px;top:746.5px;width:98.5px;height:25px;background:#1c1c1c;border-radius:3px"></div>
<div class="a" style="left:589.5px;top:746.5px;width:129px;height:25px;background:#1c1c1c;border-radius:3px"></div>
<div class="a" style="left:734px;top:746.5px;width:31.5px;height:27px;background:#141414;border-radius:3px"></div>
<div class="a" style="left:798.5px;top:746.5px;width:28.5px;height:27px;background:#141414;border-radius:3px"></div>
<div class="a" style="left:1111px;top:746.5px;width:98.5px;height:25.5px;background:#1a1a1a;border-radius:3px"></div>
<div class="t" style="left:483.0px;top:752.0px;font-size:17.92px;color:#c4c4c4;transform:scaleX(0.877);transform-origin:0 0">(78,9%)</div>
<div class="t" style="left:598.5px;top:752.0px;font-size:17.92px;color:#c4c4c4;transform:scaleX(0.901);transform-origin:0 0">Half</div>
<div class="t" style="left:972.5px;top:752.0px;font-size:17.12px;color:#3a9cef;transform:scaleX(0.882);transform-origin:0 0">+0,0</div>
<div class="t" style="left:1123.3px;top:753.0px;font-size:16.94px;color:#b8b8b8;transform:scaleX(0.908);transform-origin:0 0">0:00:01:49</div>
<svg style="left:0;top:0" width="1" height="1">
 <g fill="none" stroke="#bdbdbd" stroke-width="1.5">
  <path d="M554.5 756 L560 761.5 L565.5 756"/><path d="M701 756 L706.5 761.5 L712 756"/>
 </g>
 <g fill="#333"><rect x="579.5" y="749" width="2" height="21"/><rect x="726" y="749" width="2" height="21"/><rect x="899" y="749" width="2" height="21"/><rect x="1024.5" y="749" width="2" height="21"/><rect x="1102.5" y="749" width="2" height="21"/><rect x="1217" y="749" width="2" height="21"/></g>
 <!-- fast preview -->
 <path d="M741 767 V750.5 H760 V762" fill="none" stroke="#c0c0c0" stroke-width="1.5"/>
 <path d="M752 751.5 L746 760 L750 760 L748 766 L755 757 L751 757 Z" fill="#c0c0c0"/>
 <path d="M753 763.5 H761 L757 767.5 Z" fill="#c0c0c0"/>
 <!-- transparency grid -->
 <rect x="772" y="751.5" width="19" height="15" fill="#5a5a5a" stroke="#9a9a9a" stroke-width="1"/>
 <g fill="#9a9a9a"><rect x="772" y="751.5" width="4.75" height="5"/><rect x="781.5" y="751.5" width="4.75" height="5"/><rect x="776.75" y="756.5" width="4.75" height="5"/><rect x="786.25" y="756.5" width="4.75" height="5"/><rect x="772" y="761.5" width="4.75" height="5"/><rect x="781.5" y="761.5" width="4.75" height="5"/></g>
 <!-- mask toggle -->
 <path d="M804 767 L806 753 L821 751.5 L822 767 Z" fill="none" stroke="#3a93e6" stroke-width="1.6"/>
 <g fill="#3a93e6"><circle cx="804" cy="767" r="1.6"/><circle cx="806" cy="753" r="1.6"/><circle cx="821" cy="751.5" r="1.6"/><circle cx="822" cy="767" r="1.6"/></g>
 <!-- ROI -->
 <rect x="834.5" y="750.5" width="20" height="16" fill="none" stroke="#bdbdbd" stroke-width="1.5"/>
 <rect x="839" y="755" width="11" height="7" fill="#bdbdbd"/>
 <!-- guides -->
 <rect x="867" y="751" width="17.5" height="12.5" fill="none" stroke="#bdbdbd" stroke-width="1.3"/>
 <path d="M865.3 757.3 H886.4 M875.7 749 V765.5" stroke="#bdbdbd" stroke-width="1" stroke-dasharray="1.5 2"/>
 <path d="M878 766.5 H885 L881.5 770 Z" fill="#bdbdbd"/>
 <!-- RGB -->
 <circle cx="921" cy="753.5" r="4.3" fill="#e02a2a"/><circle cx="917.5" cy="759" r="4.3" fill="#28b030"/><circle cx="925" cy="759.5" r="4.3" fill="#3a62e8"/>
 <path d="M925.5 766 H932 L928.8 769.5 Z" fill="#bdbdbd"/>
 <!-- exposure -->
 <circle cx="953.5" cy="758.5" r="8.3" fill="#b5b5b5"/>
 <g stroke="#262626" stroke-width="1.2"><path d="M953.5 750.2 L957 757 M961.3 756 L955 760 M958.5 765 L952.5 760.5 M949 765.5 L951 758 M945.5 756 L953 755.5"/></g>
 <circle cx="953.5" cy="758.5" r="3.4" fill="#262626"/>
 <!-- camera snapshot -->
 <path d="M1038 755 H1043 L1045 752 H1051 L1053 755 H1058 V766.7 H1038 Z" fill="#b5b5b5"/>
 <circle cx="1048" cy="760.5" r="3.8" fill="#262626"/><circle cx="1048" cy="760.5" r="2.2" fill="#b5b5b5"/>
 <!-- show snapshot dim -->
 <path d="M1069.5 760 Q1078 750 1087 760 Q1078 770 1069.5 760 Z" fill="none" stroke="#444" stroke-width="1.8"/>
 <circle cx="1078" cy="760" r="3" fill="#444"/>
 <circle cx="1084" cy="753" r="4.5" fill="#444"/>
</svg>
<!-- right panel -->
<div class="a" style="left:1629px;top:37px;width:370px;height:739px;background:#262626"></div>
<div class="a" style="left:1979px;top:37px;width:20px;height:739px;background:#222"></div>
<div class="t" style="left:1646.5px;top:50.0px;font-size:16.94px;color:#bdbdbd;transform:scaleX(0.928);transform-origin:0 0">Properties</div>
<div class="a" style="left:1630px;top:77px;width:349px;height:2.5px;background:#161616"></div>
<div class="t" style="left:1646.5px;top:92.0px;font-size:17.12px;color:#bdbdbd;transform:scaleX(0.930);transform-origin:0 0">Audio</div>
<div class="a" style="left:1630px;top:120px;width:349px;height:2.5px;background:#161616"></div>
<div class="t" style="left:1646.5px;top:136.0px;font-size:16.94px;color:#e0e0e0;-webkit-text-stroke:0.35px #e0e0e0;transform:scaleX(0.899);transform-origin:0 0">Effects &amp; Presets</div>
<div class="a" style="left:1630px;top:163px;width:349px;height:2.5px;background:#161616"></div>
<div class="t" style="left:1646.5px;top:178.0px;font-size:17.12px;color:#bdbdbd;transform:scaleX(0.930);transform-origin:0 0">Preview</div>
<div class="a" style="left:1630px;top:206px;width:349px;height:2.5px;background:#161616"></div>
<div class="t" style="left:1646.5px;top:222.0px;font-size:17.12px;color:#bdbdbd;transform:scaleX(0.930);transform-origin:0 0">Libraries</div>
<div class="a" style="left:1630px;top:249px;width:349px;height:2.5px;background:#161616"></div>
<div class="t" style="left:1646.5px;top:264.0px;font-size:17.12px;color:#bdbdbd;transform:scaleX(0.930);transform-origin:0 0">Character</div>
<div class="a" style="left:1630px;top:292px;width:349px;height:2.5px;background:#161616"></div>
<div class="t" style="left:1646.5px;top:308.0px;font-size:17.12px;color:#bdbdbd;transform:scaleX(0.930);transform-origin:0 0">Paragraph</div>
<div class="a" style="left:1630px;top:335px;width:349px;height:2.5px;background:#161616"></div>
<div class="t" style="left:1646.5px;top:350.0px;font-size:17.12px;color:#bdbdbd;transform:scaleX(0.930);transform-origin:0 0">Tracker</div>
<div class="a" style="left:1630px;top:378px;width:349px;height:2.5px;background:#161616"></div>
<div class="t" style="left:1646.5px;top:394.0px;font-size:17.12px;color:#bdbdbd;transform:scaleX(0.930);transform-origin:0 0">Align</div>
<div class="a" style="left:1630px;top:421px;width:349px;height:2.5px;background:#161616"></div>
<div class="t" style="left:1646.5px;top:436.0px;font-size:17.12px;color:#bdbdbd;transform:scaleX(0.930);transform-origin:0 0">Content-Aware Fill</div>
<div class="a" style="left:1630px;top:464px;width:349px;height:2.5px;background:#161616"></div>
<div class="t" style="left:1646.5px;top:480.0px;font-size:17.12px;color:#bdbdbd;transform:scaleX(0.930);transform-origin:0 0">Paint</div>
<div class="a" style="left:1630px;top:507px;width:349px;height:2.5px;background:#161616"></div>
<div class="t" style="left:1646.5px;top:522.0px;font-size:17.12px;color:#bdbdbd;transform:scaleX(0.930);transform-origin:0 0">Motion Sketch</div>
<div class="a" style="left:1630px;top:550px;width:349px;height:2.5px;background:#161616"></div>
<div class="t" style="left:1646.5px;top:566.0px;font-size:17.12px;color:#bdbdbd;transform:scaleX(0.930);transform-origin:0 0">Brushes</div>
<div class="a" style="left:1630px;top:593px;width:349px;height:2.5px;background:#161616"></div>
<div class="t" style="left:1646.5px;top:608.0px;font-size:17.12px;color:#bdbdbd;transform:scaleX(0.930);transform-origin:0 0">Smoother</div>
<div class="a" style="left:1630px;top:636px;width:349px;height:2.5px;background:#161616"></div>
<svg style="left:0;top:0" width="1" height="1"><path d="M1952.5 139.5h12.5M1952.5 144.5h12.5M1952.5 149.5h12.5" stroke="#bdbdbd" stroke-width="1.5"/></svg>
<!-- timeline -->
<div class="a" style="left:1px;top:782px;width:1998px;height:444px;background:#141414"></div>
<div class="a" style="left:1px;top:782px;width:1997px;height:443px;background:#262626;border:2px solid #2f84dc;border-radius:0 0 6px 6px"></div>
<svg style="left:0;top:0" width="1" height="1">
 <path d="M17 797 L24 804 M24 797 L17 804" stroke="#9c9c9c" stroke-width="1.3"/>
 <rect x="39" y="793" width="14" height="14" fill="#a99574"/>
 <path d="M137 797.5h12M137 802.5h12M137 807.5h12" stroke="#bdbdbd" stroke-width="1.5"/>
</svg>
<div class="t" style="left:69.0px;top:794.0px;font-size:15.56px;color:#d0d0d0;transform:scaleX(0.973);transform-origin:0 0">Comp 1</div>
<div class="t" style="left:20.0px;top:829.0px;font-size:20.83px;font-weight:bold;color:#39a0f2;letter-spacing:-0.2px;transform:scaleX(1.030);transform-origin:0 0">0:00:01:49</div>
<div class="t" style="left:18.0px;top:852.0px;font-size:15.97px;color:#1e7ccc;transform:scaleX(0.887);transform-origin:0 0">00109 (60.00 fps)</div>
<div class="a" style="left:146px;top:833px;width:379px;height:26px;background:#141414;border-radius:3px"></div>
<svg style="left:0;top:0" width="1" height="1">
 <circle cx="165" cy="844.5" r="4.6" fill="none" stroke="#b8b8b8" stroke-width="1.3"/>
 <path d="M161.7 848 L156 853.5" stroke="#b8b8b8" stroke-width="1.4"/>
 <path d="M172 848.5 L179.5 848.5 L175.7 852 Z" fill="#b8b8b8"/>
 <!-- flowchart -->
 <g fill="#bdbdbd">
  <rect x="550" y="839" width="6" height="4.5" rx="1"/><rect x="563.5" y="838.3" width="5" height="5" rx="0.8"/><rect x="563.5" y="846.5" width="5" height="4.5" rx="0.8"/>
  <rect x="547.5" y="840.5" width="16" height="1.2"/><rect x="558.5" y="840.5" width="1.2" height="8"/><rect x="558.5" y="847.5" width="5" height="1.2"/>
  <path d="M566 852 L572 852 L569 855.5 Z"/>
 </g>
 <!-- shy -->
 <rect x="596" y="847" width="24" height="7.5" fill="#4a4a4a"/>
 <path d="M600 846 C600 840 604 837 608 837 C612 837 616 840 616 846 L619.5 846 L619.5 848.5 L611 848.5 L611 852.5 C611 854 605 854 605 852.5 L605 848.5 L596.5 848.5 L596.5 846 Z" fill="#bdbdbd"/>
 <circle cx="605.3" cy="842.5" r="1.6" fill="#262626"/><circle cx="610.7" cy="842.5" r="1.6" fill="#262626"/>
 <!-- frame blend -->
 <rect x="641" y="835.5" width="14.5" height="17" fill="#bdbdbd"/>
 <rect x="644" y="837.5" width="8.5" height="13" fill="#5a5a5a"/>
 <rect x="635.5" y="840.5" width="4" height="15.5" fill="#bdbdbd"/><rect x="635.5" y="852.5" width="14" height="3.5" fill="#bdbdbd"/>
 <rect x="645.5" y="843" width="5.5" height="1.6" fill="#bdbdbd"/>
 <!-- motion blur -->
 <circle cx="678.5" cy="849" r="6" fill="none" stroke="#bdbdbd" stroke-width="1.3"/>
 <circle cx="682" cy="845.5" r="6" fill="#262626" stroke="#bdbdbd" stroke-width="1.3"/>
 <circle cx="685.5" cy="842" r="6.5" fill="#4a4a4a" stroke="#bdbdbd" stroke-width="1.3"/>
 <!-- graph editor -->
 <rect x="721.5" y="837.5" width="21" height="18" fill="none" stroke="#bdbdbd" stroke-width="1.4"/>
 <path d="M724.5 841 C731 840 733 852 740 851.5" fill="none" stroke="#bdbdbd" stroke-width="1.3"/>
 <g stroke="#bdbdbd" stroke-width="1"><path d="M726 834.5V837M729.5 834.5V837M733 834.5V837M736.5 834.5V837M719.5 841H721.5M719.5 846H721.5M719.5 851H721.5"/></g>
</svg>
<!-- column header -->
<div class="a" style="left:3px;top:871px;width:763px;height:1px;background:#1c1c1c"></div>
<div class="a" style="left:3px;top:900px;width:763px;height:1px;background:#1e1e1e"></div>
<div class="t" style="left:153.0px;top:880.0px;font-size:13.38px;color:#a8a8a8;transform:scaleX(0.941);transform-origin:0 0">#</div>
<div class="t" style="left:201.0px;top:882.0px;font-size:12.92px;color:#b5b5b5;transform:scaleX(0.980);transform-origin:0 0">Source Name</div>
<div class="t" style="left:583.6px;top:882.0px;font-size:12.78px;color:#b5b5b5;transform:scaleX(1.035);transform-origin:0 0">Parent &amp; Link</div>
<svg style="left:0;top:0" width="1" height="1">
 <g fill="#141414"><rect x="99.5" y="879" width="1.6" height="15"/><rect x="144.5" y="879" width="1.6" height="15"/><rect x="192" y="879" width="1.6" height="15"/><rect x="378.5" y="879" width="1.6" height="15"/><rect x="574.5" y="879" width="1.6" height="15"/><rect x="742.5" y="879" width="1.6" height="15"/></g>
 <!-- eye -->
 <path d="M10 887 Q17.5 879 25.5 887 Q17.5 895 10 887 Z" fill="#bdbdbd"/>
 <circle cx="17.8" cy="887" r="2.8" fill="#262626"/><circle cx="17.8" cy="887" r="1.2" fill="#bdbdbd"/>
 <!-- audio -->
 <path d="M31 883.5 H35 L40 879.5 V894.5 L35 890.5 H31 Z" fill="#bdbdbd"/>
 <path d="M42 883 Q44.5 887 42 891 M44.5 880.5 Q49 887 44.5 893.5" fill="none" stroke="#bdbdbd" stroke-width="1.5"/>
 <!-- solo dot -->
 <circle cx="60.8" cy="886.8" r="5.2" fill="#bdbdbd"/>
 <!-- lock -->
 <path d="M78.5 885 V882 A4 4 0 0 1 86.5 882 V885" fill="none" stroke="#bdbdbd" stroke-width="1.8"/>
 <rect x="76" y="884.5" width="13" height="8.5" fill="#bdbdbd"/><rect x="81.8" y="886.5" width="1.5" height="3.5" fill="#262626"/>
 <!-- tag -->
 <path d="M119.5 879.5 L127 879.5 L137 889 L129.5 896 L119.5 886.5 Z" fill="#bdbdbd"/><circle cx="123" cy="883" r="1.4" fill="#262626"/>
 <!-- switches header -->
 <g fill="#bdbdbd">
  <path d="M388 885.5 C388 881 391 879 395 879 C399 879 402 881 402 885.5 L404 885.5 L404 887 L397.5 887 L397.5 892.5 L392.5 892.5 L392.5 887 L386 887 L386 885.5 Z"/>
  <rect x="386" y="890.8" width="6" height="1.2"/><rect x="398" y="890.8" width="6" height="1.2"/>
 </g>
 <circle cx="392.8" cy="883.5" r="1.2" fill="#262626"/><circle cx="397.2" cy="883.5" r="1.2" fill="#262626"/>
 <circle cx="416.5" cy="886.5" r="3.5" fill="none" stroke="#bdbdbd" stroke-width="1.5"/>
 <path d="M416.5 879.5V881.5M416.5 891.5V893.5M409.5 886.5H411.5M421.5 886.5H423.5M411.5 881.5L413 883M420 890L421.5 891.5M421.5 881.5L420 883M413 890L411.5 891.5" stroke="#bdbdbd" stroke-width="1.3"/>
 <path d="M430.5 879.5 L445 893.5" stroke="#bdbdbd" stroke-width="1.6" stroke-dasharray="2 1.2"/>
 <rect x="474.5" y="879" width="14.5" height="13" fill="#bdbdbd"/><rect x="477.5" y="880.5" width="8.5" height="10" fill="#4a4a4a"/><rect x="478.5" y="884.8" width="6.5" height="1.6" fill="#bdbdbd"/>
 <path d="M472 882 V893.5 H485.5" fill="none" stroke="#bdbdbd" stroke-width="1.6"/>
 <circle cx="497.5" cy="889" r="4.5" fill="none" stroke="#bdbdbd" stroke-width="1.2"/>
 <circle cx="500" cy="886.5" r="4.5" fill="#262626" stroke="#bdbdbd" stroke-width="1.2"/>
 <circle cx="504" cy="883.5" r="5.5" fill="#777" stroke="#bdbdbd" stroke-width="1.2"/>
 <circle cx="523.5" cy="886.5" r="7" fill="#bdbdbd"/><path d="M528.5 881.5 A7 7 0 0 1 518.5 891.5 Z" fill="#262626" transform="rotate(180 523.5 886.5)"/>
 <circle cx="523.5" cy="886.5" r="7" fill="none" stroke="#bdbdbd" stroke-width="1.3"/>
 <path d="M545.5 879.5 L552.5 883 V890.5 L545.5 894 L538.5 890.5 V883 Z M538.5 883 L545.5 886.5 L552.5 883 M545.5 886.5 V894" fill="none" stroke="#bdbdbd" stroke-width="1.3"/>
</svg>
<svg style="left:452px;top:878px;width:16px;height:18px;transform:scale(1.001)" viewBox="0 0 16 18"><path d="M12 2.2 C9.5 1.2 8.2 2.6 7.6 5.5 L5.2 17.2 M4.8 7.2 H10" fill="none" stroke="#bdbdbd" stroke-width="1.5" stroke-linecap="round"/><path d="M9.5 8 L15 15.5 M15.3 8 L8.8 15.8" fill="none" stroke="#bdbdbd" stroke-width="1.4" stroke-linecap="round"/></svg>
<!-- layer rows left -->
<div class="a" style="left:3px;top:901px;width:763px;height:22.5px;background:#424242"></div>
<div class="a" style="left:3px;top:925px;width:763px;height:22.5px;background:#323232"></div>
<div class="a" style="left:3px;top:923.5px;width:763px;height:1.5px;background:#262626"></div>
<div class="a" style="left:219.5px;top:901px;width:159.5px;height:22px;background:#a6a6a6"></div>
<div class="a" style="left:609.5px;top:902px;width:127.5px;height:19.5px;background:#1c1c1c"></div>
<div class="a" style="left:609.5px;top:926px;width:127.5px;height:19.5px;background:#1c1c1c"></div>
<div class="a" style="left:739px;top:901px;width:26px;height:22.5px;background:#4c4c4c"></div>
<div class="t" style="left:224.0px;top:904.0px;font-size:17.12px;color:#262626;transform:scaleX(0.940);transform-origin:0 0">camera.png</div>
<div class="t" style="left:224.0px;top:928.0px;font-size:16.25px;color:#c8c8c8;transform:scaleX(0.848);transform-origin:0 0">BG</div>
<div class="t" style="left:156.0px;top:906.0px;font-size:13.61px;color:#c8c8c8;transform:scaleX(0.925);transform-origin:0 0">1</div>
<div class="t" style="left:156.0px;top:930.0px;font-size:13.61px;color:#c8c8c8;transform:scaleX(0.925);transform-origin:0 0">2</div>
<div class="t" style="left:618.6px;top:904.0px;font-size:17.12px;color:#d0d0d0;transform:scaleX(0.889);transform-origin:0 0">None</div>
<div class="t" style="left:618.6px;top:928.0px;font-size:17.12px;color:#d0d0d0;transform:scaleX(0.889);transform-origin:0 0">None</div>
<svg style="left:0;top:0" width="1" height="1">
 <g fill="#353535">
  <rect x="9" y="902" width="18.5" height="19"/><rect x="52" y="902" width="18" height="19"/><rect x="73" y="902" width="19" height="19"/>
  <rect x="386" y="902" width="18" height="19"/><rect x="429" y="902" width="18" height="19"/><rect x="450" y="902" width="18.5" height="19"/>
  <rect x="493" y="902" width="19" height="19"/><rect x="515" y="902" width="18" height="19"/><rect x="536" y="902" width="19" height="19"/>
 </g>
 <g fill="#2a2a2a">
  <rect x="9" y="926" width="18.5" height="19"/><rect x="52" y="926" width="18" height="19"/><rect x="73" y="926" width="19" height="19"/>
  <rect x="386" y="926" width="18" height="19"/><rect x="407" y="926" width="19" height="19"/><rect x="429" y="926" width="18" height="19"/><rect x="450" y="926" width="18.5" height="19"/>
  <rect x="493" y="926" width="19" height="19"/><rect x="515" y="926" width="18" height="19"/><rect x="536" y="926" width="19" height="19"/>
 </g>
 <g id="eyes">
  <path d="M10.5 911.5 Q18 904 25.5 911.5 Q18 919 10.5 911.5 Z" fill="#bdbdbd"/><circle cx="18" cy="911.5" r="2.6" fill="#353535"/><circle cx="18" cy="911.5" r="1.1" fill="#bdbdbd"/>
  <path d="M10.5 935.5 Q18 928 25.5 935.5 Q18 943 10.5 935.5 Z" fill="#bdbdbd"/><circle cx="18" cy="935.5" r="2.6" fill="#2a2a2a"/><circle cx="18" cy="935.5" r="1.1" fill="#bdbdbd"/>
 </g>
 <g fill="none" stroke="#b5b5b5" stroke-width="1.3"><path d="M108.5 907 L113.5 912 L108.5 917"/><path d="M108.5 931 L113.5 936 L108.5 941"/></g>
 <rect x="125" y="903.5" width="17" height="16.5" fill="#a9a9d0"/>
 <rect x="125" y="927.5" width="17" height="16.5" fill="#c0393b"/>
 <path d="M199.5 903 L210 903 L214 907 L214 920 L199.5 920 Z" fill="#f0f0f0"/>
 <rect x="202" y="908" width="9" height="3.5" fill="#7aa0e0"/><rect x="202" y="911.5" width="9" height="3.5" fill="#2a3550"/>
 <rect x="196.5" y="926" width="19.5" height="20.5" fill="#2a0000" stroke="#111" stroke-width="1"/>
 <g fill="#bdbdbd" id="shy1">
  <path d="M388.5 909.5 C388.5 905.5 391.5 904 395 904 C398.5 904 401.5 905.5 401.5 909.5 L403 909.5 L403 911 L397.5 911 L397.5 916 L392.5 916 L392.5 911 L387 911 L387 909.5 Z"/>
  <rect x="387" y="914.5" width="5.5" height="1.1"/><rect x="397.5" y="914.5" width="5.5" height="1.1"/>
  <path d="M388.5 933.5 C388.5 929.5 391.5 928 395 928 C398.5 928 401.5 929.5 401.5 933.5 L403 933.5 L403 935 L397.5 935 L397.5 940 L392.5 940 L392.5 935 L387 935 L387 933.5 Z"/>
  <rect x="387" y="938.5" width="5.5" height="1.1"/><rect x="397.5" y="938.5" width="5.5" height="1.1"/>
 </g>
 <circle cx="392.8" cy="907.5" r="1.1" fill="#353535"/><circle cx="397.2" cy="907.5" r="1.1" fill="#353535"/>
 <circle cx="392.8" cy="931.5" r="1.1" fill="#2a2a2a"/><circle cx="397.2" cy="931.5" r="1.1" fill="#2a2a2a"/>
 <path d="M431 919 L445 904.5 M431 943 L445 928.5" stroke="#bdbdbd" stroke-width="1.5"/>
 <circle cx="497" cy="914.5" r="4.5" fill="none" stroke="#bdbdbd" stroke-width="1.2"/>
 <circle cx="500" cy="911.5" r="4.5" fill="#353535" stroke="#bdbdbd" stroke-width="1.2"/>
 <circle cx="503.5" cy="908.5" r="5.2" fill="#777" stroke="#bdbdbd" stroke-width="1.2"/>
 <g fill="none" stroke="#b5b5b5" stroke-width="1.3">
  <path d="M591.5 911.5 a1.8 1.8 0 1 1 3.6 0 a3.6 3.6 0 1 1 -7.2 0 a5.4 5.4 0 1 1 10.8 0 a7.2 7.2 0 1 1 -14.4 -1"/>
  <path d="M591.5 935.5 a1.8 1.8 0 1 1 3.6 0 a3.6 3.6 0 1 1 -7.2 0 a5.4 5.4 0 1 1 10.8 0 a7.2 7.2 0 1 1 -14.4 -1"/>
 </g>
 <g fill="none" stroke="#c8c8c8" stroke-width="1.5"><path d="M719 909.5 L724.5 914.5 L730 909.5"/><path d="M719 933.5 L724.5 938.5 L730 933.5"/></g>
</svg>
<svg style="left:452px;top:902px;width:16px;height:18px;transform:scale(1.001)" viewBox="0 0 16 18"><path d="M12 2.2 C9.5 1.2 8.2 2.6 7.6 5.5 L5.2 17.2 M4.8 7.2 H10" fill="none" stroke="#bdbdbd" stroke-width="1.5" stroke-linecap="round"/><path d="M9.5 8 L15 15.5 M15.3 8 L8.8 15.8" fill="none" stroke="#bdbdbd" stroke-width="1.4" stroke-linecap="round"/></svg>
<svg style="left:452px;top:926px;width:16px;height:18px;transform:scale(1.001)" viewBox="0 0 16 18"><path d="M12 2.2 C9.5 1.2 8.2 2.6 7.6 5.5 L5.2 17.2 M4.8 7.2 H10" fill="none" stroke="#bdbdbd" stroke-width="1.5" stroke-linecap="round"/><path d="M9.5 8 L15 15.5 M15.3 8 L8.8 15.8" fill="none" stroke="#bdbdbd" stroke-width="1.4" stroke-linecap="round"/></svg>
<!-- left lower -->
<div class="a" style="left:3px;top:947.5px;width:763px;height:251px;background:#282828"></div>
<div class="a" style="left:765.8px;top:829px;width:1.5px;height:370px;background:#050505"></div>
<div class="a" style="left:3px;top:1198.5px;width:1993px;height:2px;background:#0c0c0c"></div>
<!-- bottom bar -->
<div class="a" style="left:921px;top:1200.5px;width:1075px;height:22px;background:#212121"></div>
<div class="a" style="left:1972px;top:1200.5px;width:24px;height:22px;background:#282828"></div>
<div class="a" style="left:10.5px;top:1201px;width:21.5px;height:21px;background:#2c2c2c"></div>
<div class="t" style="left:152.5px;top:1203.0px;font-size:16.11px;color:#bdbdbd;transform:scaleX(0.953);transform-origin:0 0">Frame Render Time</div>
<div class="t" style="left:297.6px;top:1203.0px;font-size:17.12px;font-weight:bold;color:#c5c66e;transform:scaleX(0.891);transform-origin:0 0">77ms</div>
<div class="a" style="left:383px;top:1201px;width:190px;height:21px;background:#2a2a2a"></div>
<div class="t" style="left:391.5px;top:1203.0px;font-size:17.12px;color:#c8c8c8;transform:scaleX(0.911);transform-origin:0 0">Toggle Switches / Modes</div>
<svg style="left:0;top:0" width="1" height="1">
 <g fill="none" stroke="#2f8fe8" stroke-width="1.4">
  <rect x="13" y="1205" width="9" height="8"/><rect x="16" y="1208" width="9" height="8"/><rect x="19" y="1211" width="9" height="8"/>
 </g>
 <rect x="14" y="1206" width="7" height="6" fill="#2c2c2c"/>
 <rect x="17" y="1209" width="7" height="6" fill="#2c2c2c"/>
 <rect x="22.5" y="1214.5" width="2" height="2" fill="#2f8fe8"/>
 <circle cx="45" cy="1208.5" r="5" fill="none" stroke="#bdbdbd" stroke-width="1.3"/>
 <rect x="46.5" y="1210" width="9" height="9" fill="#262626" stroke="#bdbdbd" stroke-width="1.3"/>
 <path d="M48 1217.5 L54.5 1211 L54.5 1217.5 Z" fill="#bdbdbd"/>
 <path d="M71 1204.5 Q68.5 1204.5 68.5 1207.5 V1210 L67 1211.5 L68.5 1213 V1216 Q68.5 1219 71 1219 M79 1204.5 Q81.5 1204.5 81.5 1207.5 V1210 L83 1211.5 L81.5 1213 V1216 Q81.5 1219 79 1219" fill="none" stroke="#bdbdbd" stroke-width="1.5"/>
 <rect x="73.5" y="1204.5" width="3" height="14.5" fill="#4a4a4a"/>
 <path d="M94 1218.5 H109 C109 1216 106 1215.5 104 1215.5 C106 1213 105 1206 99.5 1206 C95 1206 93.5 1210 94.5 1213 C95 1215 96 1215.5 97 1215.5 H94 Z" fill="#bdbdbd"/>
 <path d="M105 1214 L107.5 1206.5 M106 1214 L111 1207.5" stroke="#bdbdbd" stroke-width="1"/>
 <circle cx="107.5" cy="1206.5" r="1" fill="#bdbdbd"/><circle cx="111" cy="1207.5" r="1" fill="#bdbdbd"/>
 <path d="M774.5 1213.5 L778.5 1208.5 L780.5 1210.5 L782.5 1207 L789 1213.5 Z" fill="#bdbdbd"/>
 <rect x="817" y="1212" width="56" height="2" fill="#4a4a4a"/>
 <circle cx="811.5" cy="1213" r="5.8" fill="none" stroke="#a8a8a8" stroke-width="2"/>
 <path d="M889.5 1216.5 L895.5 1209.5 L898 1209.5 L892.5 1216.5 Z M896 1216.5 L904.5 1205.5 L914 1216.5 Z" fill="#bdbdbd"/>
</svg>

<div class="a" style="left:767.3px;top:872px;width:9.7px;height:326px;background:#262626"></div>
<div class="a" style="left:777px;top:947.5px;width:1185px;height:251px;background:#353535"></div>
<div class="a" style="left:1962px;top:900px;width:10px;height:298.5px;background:#2a2a2a"></div>
<div class="a" style="left:1962px;top:901px;width:10px;height:22.5px;background:#444"></div>
<div class="a" style="left:1972px;top:829px;width:24px;height:370px;background:#212121"></div>
<div class="a" style="left:1972px;top:872px;width:24px;height:51px;background:#262626"></div>
<div class="a" style="left:767px;top:829px;width:1206px;height:13px;background:#0e0e0e;border-radius:6px 6px 0 0"></div>
<div class="a" style="left:776px;top:830.5px;width:1186px;height:10px;background:#6a6a6a"></div>
<div class="a" style="left:767px;top:830px;width:9px;height:11px;background:#2f8fe8;border-radius:6px 0 0 6px"></div>
<div class="a" style="left:1963px;top:830px;width:9px;height:11px;background:#2f8fe8;border-radius:0 6px 6px 0"></div>
<div class="a" style="left:767px;top:842px;width:1205px;height:30px;background:#232323;overflow:hidden">
<div class="a" style="left:10.4px;top:21px;width:1.4px;height:7px;background:#8a8a8a"></div>
<div class="t" style="left:-29.0px;width:80px;text-align:center;top:4.2px;font-size:15.00px;color:#a8a8a8;transform:scaleX(0.93);transform-origin:50% 0">0:00s</div>
<div class="a" style="left:89.3px;top:21px;width:1.4px;height:7px;background:#8a8a8a"></div>
<div class="t" style="left:49.9px;width:80px;text-align:center;top:4.2px;font-size:15.00px;color:#a8a8a8;transform:scaleX(0.93);transform-origin:50% 0">01s</div>
<div class="a" style="left:168.3px;top:21px;width:1.4px;height:7px;background:#8a8a8a"></div>
<div class="t" style="left:128.9px;width:80px;text-align:center;top:4.2px;font-size:15.00px;color:#a8a8a8;transform:scaleX(0.93);transform-origin:50% 0">02s</div>
<div class="a" style="left:247.2px;top:21px;width:1.4px;height:7px;background:#8a8a8a"></div>
<div class="t" style="left:207.8px;width:80px;text-align:center;top:4.2px;font-size:15.00px;color:#a8a8a8;transform:scaleX(0.93);transform-origin:50% 0">03s</div>
<div class="a" style="left:326.1px;top:21px;width:1.4px;height:7px;background:#8a8a8a"></div>
<div class="t" style="left:286.7px;width:80px;text-align:center;top:4.2px;font-size:15.00px;color:#a8a8a8;transform:scaleX(0.93);transform-origin:50% 0">04s</div>
<div class="a" style="left:405.1px;top:21px;width:1.4px;height:7px;background:#8a8a8a"></div>
<div class="t" style="left:365.7px;width:80px;text-align:center;top:4.2px;font-size:15.00px;color:#a8a8a8;transform:scaleX(0.93);transform-origin:50% 0">05s</div>
<div class="a" style="left:484.0px;top:21px;width:1.4px;height:7px;background:#8a8a8a"></div>
<div class="t" style="left:444.6px;width:80px;text-align:center;top:4.2px;font-size:15.00px;color:#a8a8a8;transform:scaleX(0.93);transform-origin:50% 0">06s</div>
<div class="a" style="left:562.9px;top:21px;width:1.4px;height:7px;background:#8a8a8a"></div>
<div class="t" style="left:523.5px;width:80px;text-align:center;top:4.2px;font-size:15.00px;color:#a8a8a8;transform:scaleX(0.93);transform-origin:50% 0">07s</div>
<div class="a" style="left:641.8px;top:21px;width:1.4px;height:7px;background:#8a8a8a"></div>
<div class="t" style="left:602.4px;width:80px;text-align:center;top:4.2px;font-size:15.00px;color:#a8a8a8;transform:scaleX(0.93);transform-origin:50% 0">08s</div>
<div class="a" style="left:720.8px;top:21px;width:1.4px;height:7px;background:#8a8a8a"></div>
<div class="t" style="left:681.4px;width:80px;text-align:center;top:4.2px;font-size:15.00px;color:#a8a8a8;transform:scaleX(0.93);transform-origin:50% 0">09s</div>
<div class="a" style="left:799.7px;top:21px;width:1.4px;height:7px;background:#8a8a8a"></div>
<div class="t" style="left:760.3px;width:80px;text-align:center;top:4.2px;font-size:15.00px;color:#a8a8a8;transform:scaleX(0.93);transform-origin:50% 0">10s</div>
<div class="a" style="left:878.6px;top:21px;width:1.4px;height:7px;background:#8a8a8a"></div>
<div class="t" style="left:839.2px;width:80px;text-align:center;top:4.2px;font-size:15.00px;color:#a8a8a8;transform:scaleX(0.93);transform-origin:50% 0">11s</div>
<div class="a" style="left:957.6px;top:21px;width:1.4px;height:7px;background:#8a8a8a"></div>
<div class="t" style="left:918.2px;width:80px;text-align:center;top:4.2px;font-size:15.00px;color:#a8a8a8;transform:scaleX(0.93);transform-origin:50% 0">12s</div>
<div class="a" style="left:1036.5px;top:21px;width:1.4px;height:7px;background:#8a8a8a"></div>
<div class="t" style="left:997.1px;width:80px;text-align:center;top:4.2px;font-size:15.00px;color:#a8a8a8;transform:scaleX(0.93);transform-origin:50% 0">13s</div>
<div class="a" style="left:1115.4px;top:21px;width:1.4px;height:7px;background:#8a8a8a"></div>
<div class="t" style="left:1076.0px;width:80px;text-align:center;top:4.2px;font-size:15.00px;color:#a8a8a8;transform:scaleX(0.93);transform-origin:50% 0">14s</div>
<div class="a" style="left:1194.4px;top:21px;width:1.4px;height:7px;background:#8a8a8a"></div>
<div class="t" style="left:1155.0px;width:80px;text-align:center;top:4.2px;font-size:15.00px;color:#a8a8a8;transform:scaleX(0.93);transform-origin:50% 0">15s</div>
</div>
<div class="a" style="left:767px;top:871px;width:1206px;height:24px;background:#0e0e0e"></div>
<div class="a" style="left:776px;top:872px;width:1186px;height:21px;background:#666"></div>
<div class="a" style="left:767px;top:872px;width:9px;height:21px;background:#2f8fe8;border-radius:6px 0 0 6px"></div>
<div class="a" style="left:1963px;top:872px;width:9px;height:21px;background:#2f8fe8;border-radius:0 6px 6px 0"></div>
<div class="a" style="left:767px;top:893px;width:1205px;height:7.5px;background:#1a1a1a"></div>
<div class="a" style="left:777px;top:894.5px;width:2.5px;height:4.5px;background:#12c12a"></div>
<div class="a" style="left:881.5px;top:894.5px;width:5.0px;height:4.5px;background:#12c12a"></div>
<div class="a" style="left:902px;top:894.5px;width:9px;height:4.5px;background:#12c12a"></div>
<div class="a" style="left:913.5px;top:894.5px;width:7.5px;height:4.5px;background:#12c12a"></div>
<div class="a" style="left:924px;top:894.5px;width:4px;height:4.5px;background:#12c12a"></div>
<div class="a" style="left:933px;top:894.5px;width:5px;height:4.5px;background:#12c12a"></div>
<div class="a" style="left:940.5px;top:894.5px;width:4.5px;height:4.5px;background:#12c12a"></div>
<div class="a" style="left:946px;top:894.5px;width:5px;height:4.5px;background:#12c12a"></div>
<div class="a" style="left:979.5px;top:894.5px;width:5.5px;height:4.5px;background:#12c12a"></div>
<div class="a" style="left:1021.5px;top:894.5px;width:3.5px;height:4.5px;background:#12c12a"></div>
<div class="a" style="left:1026.5px;top:894.5px;width:3.5px;height:4.5px;background:#12c12a"></div>
<div class="a" style="left:1047px;top:894.5px;width:915px;height:4.5px;background:#12c12a"></div>
<div class="a" style="left:767.5px;top:901px;width:10px;height:22.5px;background:#444"></div>
<div class="a" style="left:767.5px;top:925px;width:10px;height:22.5px;background:#333"></div>
<div class="a" style="left:777px;top:900.5px;width:1185px;height:23px;background:linear-gradient(180deg,#dcdcec 0,#dcdcec 1.5px,#a6a6cc 2px,#9a9ac2 60%,#8e8eb8 100%);border-left:1.5px solid #e6e6f0"></div>
<div class="a" style="left:777px;top:925px;width:1185px;height:22.5px;background:#7e3a3c"></div>
<svg style="left:777px;top:900.5px" width="1185" height="23"><defs><filter id="nz" x="0" y="0" width="100%" height="100%"><feTurbulence type="fractalNoise" baseFrequency="0.9" numOctaves="2" seed="3"/><feColorMatrix type="matrix" values="0 0 0 0 0.45  0 0 0 0 0.45  0 0 0 0 0.62  2.2 0 0 0 -0.9"/></filter><filter id="nz2" x="0" y="0" width="100%" height="100%"><feTurbulence type="fractalNoise" baseFrequency="0.8" numOctaves="2" seed="9"/><feColorMatrix type="matrix" values="0 0 0 0 0.85  0 0 0 0 0.85  0 0 0 0 0.95  2.2 0 0 0 -0.95"/></filter></defs><rect x="1.5" y="2" width="1183.5" height="21" filter="url(#nz)" opacity="0.45"/><rect x="1.5" y="2" width="1183.5" height="21" filter="url(#nz2)" opacity="0.35"/></svg>
<div class="a" style="left:1047px;top:902px;width:61px;height:18px;background:#dcdce8;border:1px solid #6a6a7a;border-radius:1px"></div>
<div class="t" style="left:1056.8px;top:904.0px;font-size:15.97px;color:#1a1a1a;transform:scaleX(0.875);transform-origin:0 0">IN 165</div>
<svg style="left:0;top:0" width="1" height="1"><path d="M1039.5 924.5 V917.5 L1046.5 911 L1053.5 917.5 V924.5 Z" fill="#c8c8c8" stroke="#555" stroke-width="1"/><rect x="1045.0" y="916" width="3" height="3" fill="#111"/></svg>
<div class="a" style="left:1702px;top:902px;width:76px;height:18px;background:#dcdce8;border:1px solid #6a6a7a;border-radius:1px"></div>
<div class="t" style="left:1713.0px;top:904.0px;font-size:15.97px;color:#1a1a1a;transform:scaleX(0.848);transform-origin:0 0">OUT 165</div>
<svg style="left:0;top:0" width="1" height="1"><path d="M1695 924.5 V917.5 L1702 911 L1709 917.5 V924.5 Z" fill="#c8c8c8" stroke="#555" stroke-width="1"/><rect x="1700.5" y="916" width="3" height="3" fill="#111"/></svg>
<svg style="left:0;top:0" width="1" height="1">
 <path d="M1977.5 875 H1993 V888 L1985.2 894.8 L1977.5 888 Z" fill="#a8a8a8"/>
 <path d="M1975 918 L1981.5 905 L1981.5 913 H1993 V919 H1981.5" fill="#a8a8a8"/>
 <path d="M1974 918 L1981.5 905.5" stroke="#a8a8a8" stroke-width="1.5"/>
 <circle cx="1982" cy="920" r="3.5" fill="#262626" stroke="#a8a8a8" stroke-width="1.5"/>
</svg>
<div class="a" style="left:920.5px;top:866px;width:1.6px;height:333px;background:#2f8fe8"></div>
<div class="a" style="left:920.5px;top:830.5px;width:1.4px;height:10px;background:#3a9af0"></div>
<svg style="left:0;top:0" width="1" height="1"><path d="M914 851 Q914 850 915 850 H928 Q929 850 929 851 V858 L921.5 868.5 L914 858 Z" fill="#2f8fe8"/><path d="M919.5 858 H923.5 L921.5 861 Z" fill="#1a4a80"/></svg>
</body></html>
